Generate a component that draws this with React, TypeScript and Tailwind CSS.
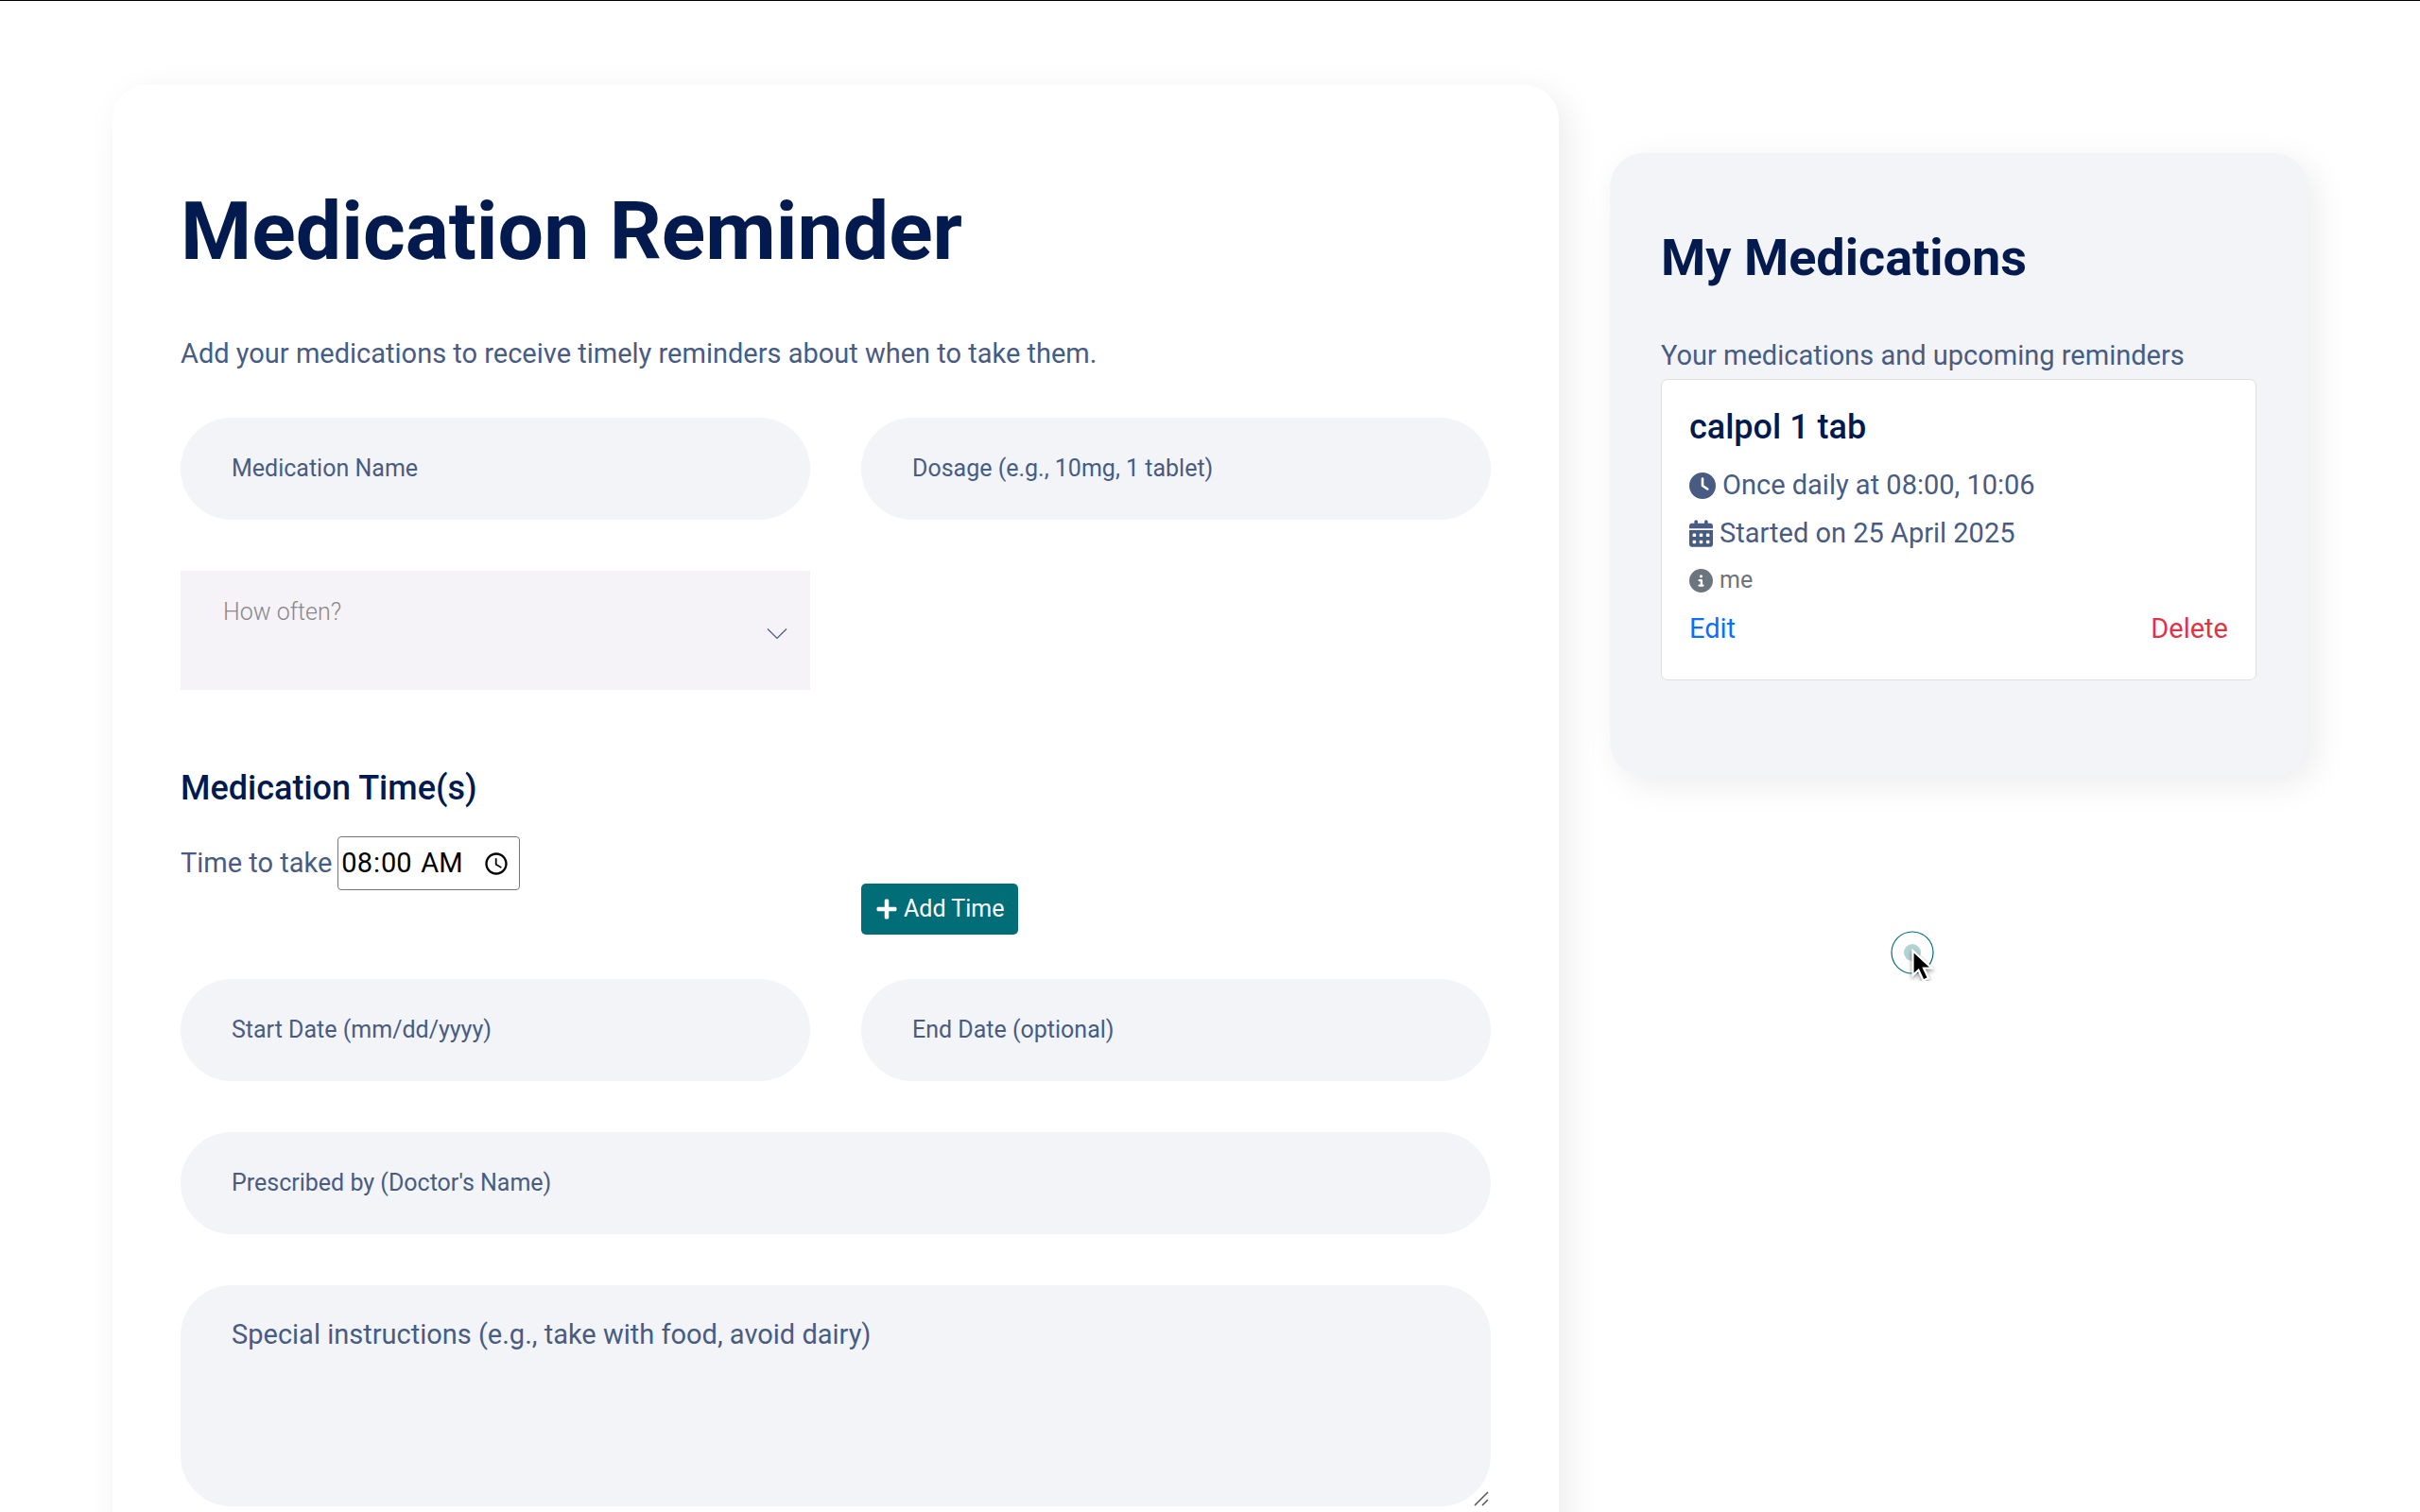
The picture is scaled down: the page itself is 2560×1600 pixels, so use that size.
import { useState } from "react";
import type { ComponentProps } from "react";
import clsx from "clsx";
import { FaPlus } from "react-icons/fa";
import { FaCalendarDays, FaCircleInfo, FaClock } from "react-icons/fa6";

interface Medication {
    name: string;
    dosage: string;
    frequency: string;
    times: string[];
    startDate: string;
    notes?: string;
}

const medications: Medication[] = [
    {
        name: "calpol",
        dosage: "1 tab",
        frequency: "Once daily",
        times: ["08:00", "10:06"],
        startDate: "25 April 2025",
        notes: "me",
    },
];

const frequencies = ["Once daily", "Twice daily", "Three times daily", "Weekly", "As needed"];

function TextField({ className, placeholder, ...props }: ComponentProps<"input">) {
    return (
        <input
            type="text"
            aria-label={placeholder}
            placeholder={placeholder}
            className={clsx(
                "h-[108px] w-full rounded-full bg-[#f2f4f8] px-[54px] pb-0.5 text-[25px] text-[#485c83] outline-none placeholder:text-[#485c83]",
                className
            )}
            {...props}
        />
    );
}

function FrequencySelect() {
    return (
        <div className="relative">
            <select
                aria-label="How often?"
                defaultValue=""
                className="h-[126px] w-full appearance-none bg-[#f5f3f8] pt-6 pb-[62px] pl-[45px] text-[25px] font-light text-[#888888] outline-none"
            >
                <option value="" disabled>How often?</option>
                {frequencies.map((frequency) => (
                    <option key={frequency} value={frequency}>{frequency}</option>
                ))}
            </select>
            <svg
                viewBox="0 0 22 13"
                className="pointer-events-none absolute top-[60px] right-6 h-[13px] w-[22px]"
                fill="none"
                stroke="#485c83"
                strokeWidth="1.2"
            >
                <path d="M1 1.5 L11 11.5 L21 1.5" />
            </svg>
        </div>
    );
}

function InstructionsField() {
    return (
        <div className="relative col-span-2">
            <textarea
                aria-label="Special instructions"
                placeholder="Special instructions (e.g., take with food, avoid dairy)"
                className="block h-[234px] w-full resize-y rounded-[54px] bg-[#f2f4f8] px-[54px] py-[30px] leading-[44px] outline-none placeholder:text-[#485c83] [&::-webkit-resizer]:hidden"
            />
            <svg
                viewBox="0 0 16 16"
                className="pointer-events-none absolute right-0.5 bottom-0 size-4"
                stroke="#555"
                strokeWidth="1.5"
            >
                <path d="M1 15 L15 1 M9 15 L15 9" />
            </svg>
        </div>
    );
}

function MedicationCard({ medication }: { medication: Medication }) {
    return (
        <div className="rounded-[7px] border border-[#dfdfdf] bg-white px-[29px] py-7 text-[29px] leading-[51px]">
            <h5 className="mb-[14px] text-[36px] leading-[44px] font-medium text-[#021a4e]">
                {medication.name} {medication.dosage}
            </h5>
            <p className="flex items-center gap-[7px]">
                <FaClock className="size-7" />
                {medication.frequency} at {medication.times.join(", ")}
            </p>
            <p className="flex items-center gap-[7px]">
                <FaCalendarDays className="h-[29px] w-[25px]" />
                Started on {medication.startDate}
            </p>
            {medication.notes && (
                <p className="mb-0.5 flex items-center gap-[7px] text-[25px] leading-[48px] text-[#6c757d]">
                    <FaCircleInfo className="size-[25px]" />
                    {medication.notes}
                </p>
            )}
            <div className="flex justify-between">
                <a href="#edit" className="text-[#0d6efd]">Edit</a>
                <a href="#delete" className="text-[#dc3545]">Delete</a>
            </div>
        </div>
    );
}

function Cursor() {
    return (
        <svg
            viewBox="0 0 60 60"
            className="pointer-events-none absolute top-[977px] left-[1993px] size-[60px]"
        >
            <circle cx="30" cy="30" r="22" fill="none" stroke="#006d77" strokeWidth="1.2" />
            <circle cx="30" cy="30" r="9" fill="#006d77" opacity="0.3" />
            <path
                d="M30.5 28 V54 L36.5 48.5 L41.5 59.5 L47 57 L42 46.5 H50.5 Z"
                fill="#000"
                stroke="#fff"
                strokeWidth="2.2"
                className="drop-shadow-[0_2px_2px_rgba(0,0,0,0.45)]"
            />
        </svg>
    );
}

export default function App() {
    const [times, setTimes] = useState(["08:00"]);

    return (
        <main className="relative h-screen overflow-hidden border-t border-black bg-white font-['Roboto',sans-serif] text-[29px] text-[#485c83]">
            <div className="mx-auto grid max-w-[2376px] grid-cols-3 items-start gap-[54px] px-[27px] pt-[89px]">
                <section className="col-span-2 rounded-[36px] bg-white px-[72px] pt-[103px] pb-[72px] shadow-[9px_9px_36px_rgba(0,0,0,0.08)]">
                    <h1 className="text-[86px] leading-[104px] font-bold text-[#021a4e]">Medication Reminder</h1>
                    <p className="mt-[51px] leading-[52px]">
                        Add your medications to receive timely reminders about when to take them.
                    </p>

                    <form className="mt-[42px] grid grid-cols-2 gap-[54px]">
                        <TextField placeholder="Medication Name" />
                        <TextField placeholder="Dosage (e.g., 10mg, 1 tablet)" />
                        <FrequencySelect />

                        <div className="col-span-2 -mb-[7px] mt-7 grid grid-cols-2 gap-[54px]">
                            <div className="pb-[47px]">
                                <h5 className="mb-[29px] text-[36px] leading-[44px] font-medium text-[#021a4e]">
                                    Medication Time(s)
                                </h5>
                                {times.map((time, index) => (
                                    <div key={index} className="flex items-center gap-1.5">
                                        <label htmlFor={`time-${index}`}>Time to take</label>
                                        <input
                                            id={`time-${index}`}
                                            type="time"
                                            defaultValue={time}
                                            className="h-[57px] w-[193px] rounded-[4px] border border-[#767676] bg-white pr-2.5 pl-0.5 text-[29px] text-black [&::-webkit-calendar-picker-indicator]:ml-0 [&::-webkit-calendar-picker-indicator]:size-7 [&::-webkit-calendar-picker-indicator]:p-0 [&::-webkit-datetime-edit-ampm-field]:ml-1"
                                        />
                                    </div>
                                ))}
                            </div>
                            <button
                                type="button"
                                onClick={() => setTimes([...times, "08:00"])}
                                className="flex h-[54px] w-fit items-center gap-1.5 self-end rounded-[5px] bg-[#006d77] px-[15px] text-[25px] text-white"
                            >
                                <FaPlus className="size-6" />
                                Add Time
                            </button>
                        </div>

                        <TextField placeholder="Start Date (mm/dd/yyyy)" />
                        <TextField placeholder="End Date (optional)" />
                        <TextField placeholder="Prescribed by (Doctor's Name)" className="col-span-2" />
                        <InstructionsField />
                    </form>
                </section>

                <aside className="mt-[72px] rounded-[36px] bg-[#f2f4f8] px-[54px] pt-[79px] pb-[101px] shadow-[9px_9px_36px_rgba(0,0,0,0.08)]">
                    <h2 className="text-[54px] leading-[64px] font-bold text-[#021a4e]">My Medications</h2>
                    <p className="mt-[46px] leading-[50px]">Your medications and upcoming reminders</p>
                    {medications.map((medication) => (
                        <MedicationCard key={medication.name} medication={medication} />
                    ))}
                </aside>
            </div>
            <Cursor />
        </main>
    );
}
